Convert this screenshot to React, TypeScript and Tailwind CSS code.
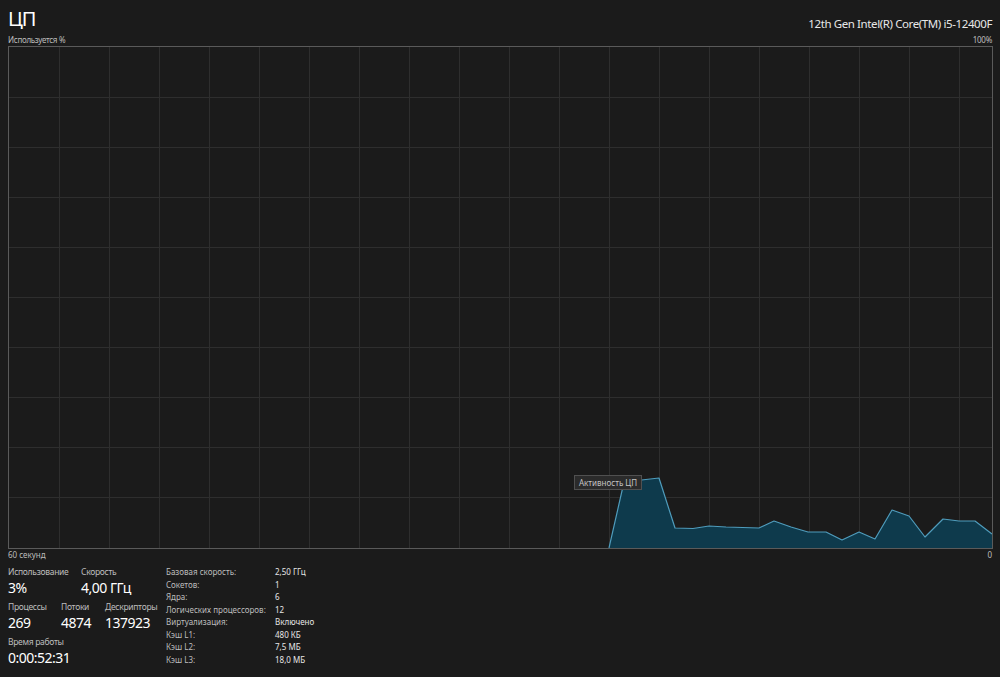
import React from 'react';

const font = { fontFamily: '"Noto Sans", "Open Sans", sans-serif' };

const points: [number, number][] = [
  [600, 501], [615, 435], [650, 431], [666, 481], [684, 481.5], [700, 479], [717, 480],
  [750, 481], [765, 474], [782, 480], [799, 485], [817, 485], [833, 493], [850, 485],
  [866, 492], [883, 463], [900, 469], [916, 490], [934, 472], [950, 474], [966, 474], [983, 487],
];

const CpuChart: React.FC = () => {
  const line = points.map(([x, y]) => `${x},${y}`).join(' ');
  const area = `${line} 983,501 600,501`;
  const vLines = Array.from({ length: 19 }, (_, i) => (i + 1) * 50);
  const hLines = Array.from({ length: 9 }, (_, i) => (i + 1) * 50);
  return (
    <svg width="983" height="501" viewBox="0 0 983 501" className="block">
      {vLines.map((x) => (
        <line key={'v' + x} x1={x + 0.5} y1={0} x2={x + 0.5} y2={501} stroke="#2e2e2e" strokeWidth={1} />
      ))}
      {hLines.map((y) => (
        <line key={'h' + y} x1={0} y1={y + 0.5} x2={983} y2={y + 0.5} stroke="#2e2e2e" strokeWidth={1} />
      ))}
      <polygon points={area} fill="#0e3a4c" />
      <polyline points={line} fill="none" stroke="#4f9cbc" strokeWidth={1.2} strokeLinejoin="round" />
    </svg>
  );
};

const Stat: React.FC<{ label: string; value: string; className?: string }> = ({ label, value, className }) => (
  <div className={className}>
    <div className="text-[8.5px] leading-[12px] tracking-[-0.3px] text-[#bdbdbd]">{label}</div>
    <div className="text-[14px] leading-[20px] tracking-[-0.5px] text-white">{value}</div>
  </div>
);

const details: [string, string][] = [
  ['Базовая скорость:', '2,50 ГГц'],
  ['Сокетов:', '1'],
  ['Ядра:', '6'],
  ['Логических процессоров:', '12'],
  ['Виртуализация:', 'Включено'],
  ['Кэш L1:', '480 КБ'],
  ['Кэш L2:', '7,5 МБ'],
  ['Кэш L3:', '18,0 МБ'],
];

export default function App() {
  return (
    <div className="w-[1000px] h-[677px] overflow-hidden bg-[#1b1b1b] text-white px-2" style={font}>
      <div className="flex items-end justify-between pt-[6px] h-[32px]">
        <span className="text-[20px] leading-[26px] tracking-[-1px]">ЦП</span>
        <span className="text-[11.5px] leading-[16px] tracking-[-0.4px] text-[#e8e8e8]">
          12th Gen Intel(R) Core(TM) i5-12400F
        </span>
      </div>
      <div className="flex justify-between text-[8px] leading-[15px] tracking-[-0.3px] text-[#bdbdbd] h-[15px]">
        <span>Используется %</span>
        <span>100%</span>
      </div>
      <div className="relative border border-[#5a5a5a] w-[985px] h-[503px] -mt-[1px]">
        <CpuChart />
        <div className="absolute left-[565px] top-[428px] h-[15px] px-[4px] border border-[#505050] bg-[#2b2b2b] text-[8px] leading-[13px] text-[#c4c4c4]">
          Активность ЦП
        </div>
      </div>
      <div className="flex justify-between text-[8px] leading-[12px] text-[#bdbdbd]">
        <span>60 секунд</span>
        <span>0</span>
      </div>
      <div className="flex mt-[5px]">
        <div className="w-[158px] flex flex-col gap-[3px]">
          <div className="flex">
            <Stat label="Использование" value="3%" className="w-[73px]" />
            <Stat label="Скорость" value="4,00 ГГц" />
          </div>
          <div className="flex">
            <Stat label="Процессы" value="269" className="w-[53px]" />
            <Stat label="Потоки" value="4874" className="w-[44px]" />
            <Stat label="Дескрипторы" value="137923" />
          </div>
          <Stat label="Время работы" value="0:00:52:31" />
        </div>
        <div className="flex flex-col">
          {details.map(([k, v]) => (
            <div key={k} className="flex text-[8px] leading-[12.5px]">
              <span className="w-[109px] text-[#bdbdbd]">{k}</span>
              <span className="text-[#e6e6e6]">{v}</span>
            </div>
          ))}
        </div>
      </div>
    </div>
  );
}
